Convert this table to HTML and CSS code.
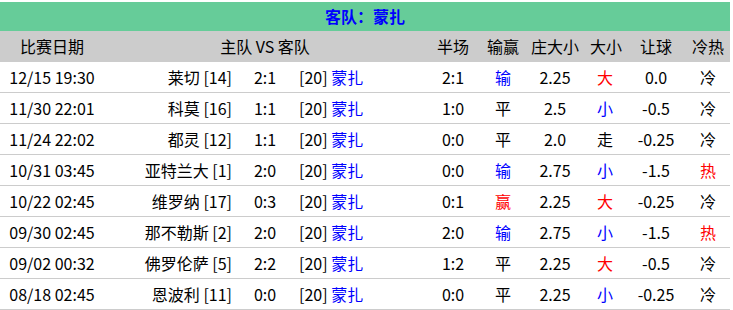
FILE: index.html
```html
<!DOCTYPE html>
<html>
<head>
<meta charset="utf-8">
<link rel="stylesheet" href="styles.css">
</head>
<body>
<div class="panel">
  <div class="title">客队：<span class="team">蒙扎</span></div>
  <div class="row head">
    <div class="c-date">比赛日期</div>
    <div class="c-vs">主队 VS 客队</div>
    <div class="c-c">半场</div>
    <div class="c-c">输赢</div>
    <div class="c-c">庄大小</div>
    <div class="c-c">大小</div>
    <div class="c-c">让球</div>
    <div class="c-c">冷热</div>
  </div>
  <div class="row"><div class="c-date">12/15 19:30</div><div class="c-home">莱切 [14]</div><div class="c-c">2:1</div><div class="c-away">[20] <span class="team">蒙扎</span></div><div class="c-c">2:1</div><div class="c-c blue">输</div><div class="c-c">2.25</div><div class="c-c red">大</div><div class="c-c">0.0</div><div class="c-c">冷</div></div>
  <div class="row"><div class="c-date">11/30 22:01</div><div class="c-home">科莫 [16]</div><div class="c-c">1:1</div><div class="c-away">[20] <span class="team">蒙扎</span></div><div class="c-c">1:0</div><div class="c-c">平</div><div class="c-c">2.5</div><div class="c-c blue">小</div><div class="c-c">-0.5</div><div class="c-c">冷</div></div>
  <div class="row"><div class="c-date">11/24 22:02</div><div class="c-home">都灵 [12]</div><div class="c-c">1:1</div><div class="c-away">[20] <span class="team">蒙扎</span></div><div class="c-c">0:0</div><div class="c-c">平</div><div class="c-c">2.0</div><div class="c-c">走</div><div class="c-c">-0.25</div><div class="c-c">冷</div></div>
  <div class="row"><div class="c-date">10/31 03:45</div><div class="c-home">亚特兰大 [1]</div><div class="c-c">2:0</div><div class="c-away">[20] <span class="team">蒙扎</span></div><div class="c-c">0:0</div><div class="c-c blue">输</div><div class="c-c">2.75</div><div class="c-c blue">小</div><div class="c-c">-1.5</div><div class="c-c red">热</div></div>
  <div class="row"><div class="c-date">10/22 02:45</div><div class="c-home">维罗纳 [17]</div><div class="c-c">0:3</div><div class="c-away">[20] <span class="team">蒙扎</span></div><div class="c-c">0:1</div><div class="c-c red">赢</div><div class="c-c">2.25</div><div class="c-c red">大</div><div class="c-c">-0.25</div><div class="c-c">冷</div></div>
  <div class="row"><div class="c-date">09/30 02:45</div><div class="c-home">那不勒斯 [2]</div><div class="c-c">2:0</div><div class="c-away">[20] <span class="team">蒙扎</span></div><div class="c-c">2:0</div><div class="c-c blue">输</div><div class="c-c">2.75</div><div class="c-c blue">小</div><div class="c-c">-1.5</div><div class="c-c red">热</div></div>
  <div class="row"><div class="c-date">09/02 00:32</div><div class="c-home">佛罗伦萨 [5]</div><div class="c-c">2:2</div><div class="c-away">[20] <span class="team">蒙扎</span></div><div class="c-c">1:2</div><div class="c-c">平</div><div class="c-c">2.25</div><div class="c-c red">大</div><div class="c-c">-0.5</div><div class="c-c">冷</div></div>
  <div class="row"><div class="c-date">08/18 02:45</div><div class="c-home">恩波利 [11]</div><div class="c-c">0:0</div><div class="c-away">[20] <span class="team">蒙扎</span></div><div class="c-c">0:0</div><div class="c-c">平</div><div class="c-c">2.25</div><div class="c-c blue">小</div><div class="c-c">-0.25</div><div class="c-c">冷</div></div>
</div>
</body>
</html>
```

FILE: styles.css
```css
html, body {
  margin: 0;
  padding: 0;
  background: #fff;
}
body {
  padding-top: 2px;
  font-family: "Noto Sans CJK SC", "Noto Sans", sans-serif;
  font-size: 16px;
  color: #000;
}
.panel {
  width: 730px;
}
.title {
  height: 29px;
  line-height: 29px;
  background: #66cc99;
  color: #0000ff;
  font-weight: bold;
  text-align: center;
}
.team {
  color: #0000ff;
}
.row {
  display: grid;
  grid-template-columns: 104px 132px 58px 126px 66px 34px 70px 30px 72px 32px;
  padding-right: 6px;
  height: 30px;
  line-height: 30px;
  border-bottom: 1px solid #cccccc;
  white-space: nowrap;
}
.row.head {
  height: 31px;
  line-height: 31px;
  background: #cccccc;
  border-bottom: none;
}
.c-date {
  text-align: center;
}
.c-vs {
  grid-column: span 3;
  text-align: center;
  padding-left: 6px;
}
.c-home {
  text-align: right;
  padding-right: 4px;
}
.c-away {
  text-align: left;
  padding-left: 5px;
}
.c-c {
  text-align: center;
}
.blue { color: #0000ff; }
.red { color: #ff0000; }
```
